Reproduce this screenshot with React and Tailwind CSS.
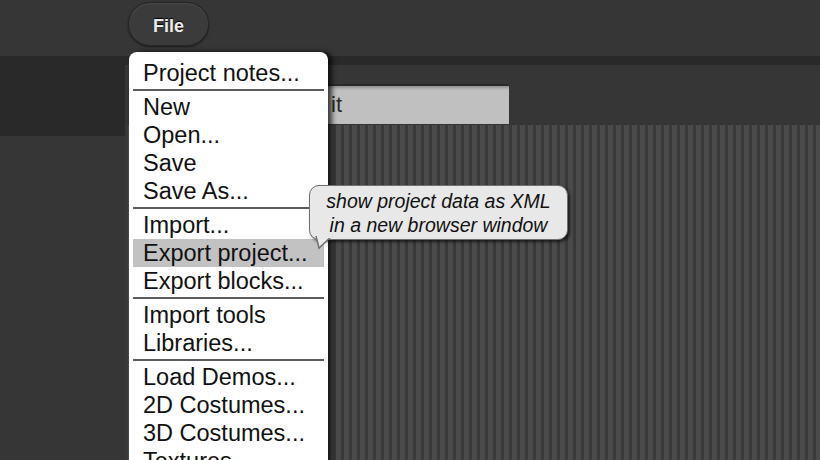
export default function App() {
  const groups = [
    ["Project notes..."],
    ["New", "Open...", "Save", "Save As..."],
    ["Import...", "Export project...", "Export blocks..."],
    ["Import tools", "Libraries..."],
    ["Load Demos...", "2D Costumes...", "3D Costumes...", "Textures..."],
  ];

  return (
    <div className="relative w-[820px] h-[460px] overflow-hidden bg-[#363636] font-['Liberation_Sans',Arial,sans-serif]">
      {/* top bar */}
      <div className="h-[56px] flex items-start">
        <button className="ml-[128px] mt-[2px] w-[81px] h-[44px] pt-[4px] rounded-full bg-[#3b3b3b] border border-[#262626] shadow-[inset_0_1px_2px_rgba(255,255,255,0.08),0_1px_2px_rgba(0,0,0,0.5)] text-[18px] font-bold text-[#ececec] [text-shadow:0_-1px_1px_#000]">
          File
        </button>
      </div>

      {/* body */}
      <div className="flex h-[404px]">
        <div className="w-[125px] flex flex-col">
          <div className="h-[80px] bg-[#292929]" />
          <div className="flex-1 bg-[#363636]" />
        </div>
        <div className="flex-1 flex flex-col">
          <div className="h-[9px] bg-[#292929]" />
          <div className="h-[60px] pt-[19px]">
            <div className="ml-[175px] w-[209px] h-[40px] bg-[#c0c0c0] border-t-2 border-[#2a2a2a] shadow-[inset_2px_2px_3px_rgba(0,0,0,0.25)] pl-[31px] text-[22px] leading-[38px] text-[#2a2a2a]">
              it
            </div>
          </div>
          <div className="flex-1 bg-[repeating-linear-gradient(90deg,#393939_0px,#393939_3px,#4a4a4a_3px,#4a4a4a_8px)]" />
        </div>
      </div>

      {/* file menu */}
      <div className="absolute left-[129px] top-[52px] w-[199px] h-[430px] bg-white rounded-t-[8px] pt-[7px] shadow-[4px_0_5px_rgba(0,0,0,0.7)]">
        {groups.map((items, gi) => (
          <div key={gi}>
            {gi > 0 && (
              <div className="h-[6px] pt-[2px]">
                <div className="mx-[4px] h-[2px] bg-[#5c5c5c]" />
              </div>
            )}
            {items.map((label) => (
              <div
                key={label}
                className={`mx-[4px] px-[10px] h-[28px] text-[23.5px] leading-[28px] text-[#111] whitespace-nowrap ${
                  label === "Export project..." ? "bg-[#c2c2c2]" : ""
                }`}
              >
                {label}
              </div>
            ))}
          </div>
        ))}
      </div>

      {/* tooltip */}
      <div className="absolute left-[309px] top-[185px] w-[259px] h-[55px] rounded-[10px] bg-[#e8e8e8] border-[1.5px] border-[#6f6f6f] shadow-[2px_2px_3px_rgba(0,0,0,0.6)] flex flex-col items-center justify-center text-[19.5px] leading-[24px] italic text-[#111]">
        <div>show project data as XML</div>
        <div>in a new browser window</div>
        <svg className="absolute left-[4px] top-[50px]" width="24" height="16" viewBox="0 0 24 16">
          <path d="M2 0 L5 12 L18 0" fill="#e8e8e8" stroke="#6f6f6f" strokeWidth="1.5" />
          <rect x="3" y="0" width="15" height="2" fill="#e8e8e8" />
        </svg>
      </div>
    </div>
  );
}
